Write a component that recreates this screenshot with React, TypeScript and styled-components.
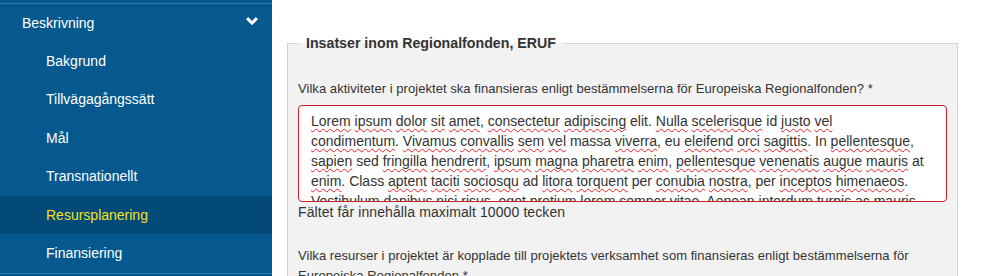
import React from "react";
import styled, { createGlobalStyle } from "styled-components";

const GlobalStyle = createGlobalStyle`
  html, body { margin: 0; padding: 0; background: #ffffff; }
  body {
    font-family: "Liberation Sans", Arial, Helvetica, sans-serif;
    font-size: 14px;
    line-height: 20px;
    color: #333333;
    overflow: hidden;
  }
  * { box-sizing: border-box; }
`;

const Page = styled.div`
  display: flex;
  align-items: flex-start;
  width: 981px;
  height: 276px;
  overflow: hidden;
`;

const Sidebar = styled.nav`
  flex: 0 0 272px;
  height: 276px;
  background: #05598f;
  padding-top: 3px;
`;

const NavGroup = styled.ul`
  list-style: none;
  margin: 0;
  padding: 0;
  border-top: 1px solid #2f79ae;
  border-bottom: 1px solid #2f79ae;
`;

const NavHeader = styled.li`
  display: flex;
  align-items: center;
  justify-content: space-between;
  height: 37.5px;
  padding: 0 14px 0 22px;
  color: #ffffff;
  font-size: 14px;
`;

const NavItem = styled.li<{ $active?: boolean }>`
  display: flex;
  align-items: center;
  height: 38.5px;
  padding-left: 46px;
  font-size: 14px;
  color: ${(p) => (p.$active ? "#f2e21e" : "#ffffff")};
  background: ${(p) => (p.$active ? "#034a79" : "transparent")};
`;

const Chevron = styled.svg`
  width: 12px;
  height: 8px;
  display: block;
  margin-top: -3px;
`;

const Main = styled.main`
  flex: 1;
  padding: 33px 23px 0 15px;
`;

const Fieldset = styled.fieldset`
  margin: 0;
  padding: 0 10px 20px;
  border: 1px solid #d2d2d2;
  background: #f2f2f2;
  min-width: 0;
`;

const Legend = styled.legend`
  padding: 0 8px;
  margin: 0;
  font-size: 14.2px;
  line-height: 20px;
  font-weight: bold;
  color: #333333;
`;

const FormGroup = styled.div<{ $top: number }>`
  margin-top: ${(p) => p.$top}px;
`;

const Label = styled.label`
  display: block;
  font-weight: normal;
  font-size: 13px;
  line-height: 20px;
  color: #333333;
  letter-spacing: 0.05px;
  margin-bottom: 6px;
`;

const TextBox = styled.div`
  height: 97px;
  overflow: hidden;
  background: #ffffff;
  border: 1px solid #cc2026;
  border-radius: 4px;
  padding: 5px 12px 0;
  color: #333333;
  font-size: 14px;
`;

const TextLine = styled.div`
  white-space: nowrap;
  line-height: 20px;
`;

const Miss = styled.span`
  text-decoration-line: underline;
  text-decoration-style: wavy;
  text-decoration-color: #e8202a;
  text-decoration-thickness: 1px;
  text-underline-offset: 2px;
  text-decoration-skip-ink: none;
`;

const Help = styled.p`
  margin: 0 0 24px;
  font-size: 14px;
  color: #333333;
  letter-spacing: 0.1px;
`;

const lines = [
  "~Lorem ~ipsum ~dolor ~sit ~amet, ~consectetur ~adipiscing elit. ~Nulla ~scelerisque id ~justo ~vel",
  "~condimentum. ~Vivamus ~convallis ~sem ~vel massa ~viverra, eu ~eleifend ~orci ~sagittis. In ~pellentesque,",
  "~sapien sed ~fringilla ~hendrerit, ~ipsum ~magna ~pharetra ~enim, ~pellentesque ~venenatis ~augue ~mauris at",
  "~enim. Class ~aptent ~taciti ~sociosqu ad ~litora ~torquent per ~conubia ~nostra, per ~inceptos ~himenaeos.",
  "~Vestibulum ~dapibus ~nisi ~risus, ~eget ~pretium ~lorem ~semper ~vitae. ~Aenean ~interdum ~turpis ac ~mauris",
];

function renderLine(line: string) {
  const tokens = line.split(" ");
  return tokens.map((tok, i) => {
    const sep = i < tokens.length - 1 ? " " : "";
    if (tok.startsWith("~")) {
      const m = tok.slice(1).match(/^(.*?)([.,?]*)$/);
      const word = m ? m[1] : tok.slice(1);
      const punct = m ? m[2] : "";
      return (
        <React.Fragment key={i}>
          <Miss>{word}</Miss>
          {punct}
          {sep}
        </React.Fragment>
      );
    }
    return <React.Fragment key={i}>{tok + sep}</React.Fragment>;
  });
}

const subItems = [
  "Bakgrund",
  "Tillvägagångssätt",
  "Mål",
  "Transnationellt",
  "Resursplanering",
  "Finansiering",
];

export default function App() {
  return (
    <>
      <GlobalStyle />
      <Page>
        <Sidebar>
          <NavGroup>
            <NavHeader>
              <span>Beskrivning</span>
              <Chevron viewBox="0 0 12 8" aria-hidden="true">
                <polygon points="0,2.2 2.1,0 6,3.9 9.9,0 12,2.2 6,8.2" fill="#ffffff" />
              </Chevron>
            </NavHeader>
            {subItems.map((s) => (
              <NavItem key={s} $active={s === "Resursplanering"}>
                {s}
              </NavItem>
            ))}
          </NavGroup>
        </Sidebar>
        <Main>
          <Fieldset>
            <Legend>Insatser inom Regionalfonden, ERUF</Legend>
            <FormGroup $top={26}>
              <Label>
                Vilka aktiviteter i projektet ska finansieras enligt bestämmelserna för Europeiska
                Regionalfonden? *
              </Label>
              <TextBox role="textbox" aria-multiline="true">
                {lines.map((l, i) => (
                  <TextLine key={i}>{renderLine(l)}</TextLine>
                ))}
              </TextBox>
              <Help>Fältet får innehålla maximalt 10000 tecken</Help>
            </FormGroup>
            <FormGroup $top={0}>
              <Label>
                Vilka resurser i projektet är kopplade till projektets verksamhet som finansieras
                enligt bestämmelserna för Europeiska Regionalfonden *
              </Label>
            </FormGroup>
          </Fieldset>
        </Main>
      </Page>
    </>
  );
}
